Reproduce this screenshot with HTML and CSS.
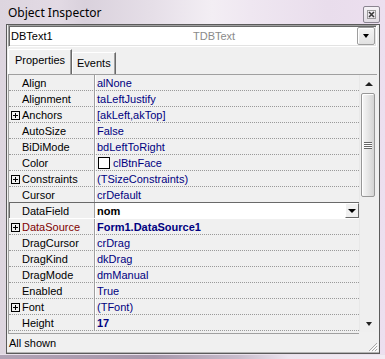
FILE: index.html
```html
<!doctype html>
<html>
<head>
	<meta charset="utf-8">
	<title>Object Inspector</title>
	<link rel="stylesheet" href="styles.css">
</head>
<body>
	<div class="frame">
		<div class="titlebar">
			<span class="caption">Object Inspector</span>
			<span class="close">
				<svg width="9" height="9" viewBox="0 0 9 9">
					<rect x="0.5" y="0.5" width="8" height="8" fill="none" stroke="#9a9a9a"/>
					<path d="M2 2 L7 7 M7 2 L2 7" stroke="#3a3a3a" stroke-width="1.6"/>
				</svg>
			</span>
		</div>
		<div class="client">
			<div class="combo">
				<span class="combo-name">DBText1</span>
				<span class="combo-type">TDBText</span>
				<span class="combo-btn"><i class="down"></i></span>
			</div>
			<div class="tabs">
				<div class="tab active">Properties</div>
				<div class="tab">Events</div>
			</div>
			<div class="grid">
				<div class="rows">
					<div class="row"><div class="name"><span class="exp"></span>Align</div><div class="value">alNone</div></div>
					<div class="row"><div class="name"><span class="exp"></span>Alignment</div><div class="value">taLeftJustify</div></div>
					<div class="row"><div class="name"><span class="exp plus"></span>Anchors</div><div class="value">[akLeft,akTop]</div></div>
					<div class="row"><div class="name"><span class="exp"></span>AutoSize</div><div class="value">False</div></div>
					<div class="row"><div class="name"><span class="exp"></span>BiDiMode</div><div class="value">bdLeftToRight</div></div>
					<div class="row"><div class="name"><span class="exp"></span>Color</div><div class="value"><span class="swatch"></span>clBtnFace</div></div>
					<div class="row"><div class="name"><span class="exp plus"></span>Constraints</div><div class="value">(TSizeConstraints)</div></div>
					<div class="row before-sel"><div class="name"><span class="exp"></span>Cursor</div><div class="value">crDefault</div></div>
					<div class="row selected"><div class="name"><span class="exp"></span>DataField</div><div class="value edit"><b>nom</b><span class="row-btn"><i class="down"></i></span></div></div>
					<div class="row"><div class="name ref"><span class="exp plus"></span>DataSource</div><div class="value"><b>Form1.DataSource1</b></div></div>
					<div class="row"><div class="name"><span class="exp"></span>DragCursor</div><div class="value">crDrag</div></div>
					<div class="row"><div class="name"><span class="exp"></span>DragKind</div><div class="value">dkDrag</div></div>
					<div class="row"><div class="name"><span class="exp"></span>DragMode</div><div class="value">dmManual</div></div>
					<div class="row"><div class="name"><span class="exp"></span>Enabled</div><div class="value">True</div></div>
					<div class="row"><div class="name"><span class="exp plus"></span>Font</div><div class="value">(TFont)</div></div>
					<div class="row"><div class="name"><span class="exp"></span>Height</div><div class="value"><b>17</b></div></div>
				</div>
				<div class="vscroll">
					<div class="sb-arrow"><i class="up"></i></div>
					<div class="thumb"><span class="grip"></span></div>
					<div class="sb-track"></div>
					<div class="sb-arrow"><i class="down small"></i></div>
				</div>
			</div>
			<div class="status">
				All shown
				<svg class="sizegrip" width="12" height="12" viewBox="0 0 12 12">
					<path d="M11 3 L3 11 M11 6 L6 11 M11 9 L9 11" stroke="#a8a8a8" stroke-width="1"/>
					<path d="M12 4 L4 12 M12 7 L7 12 M12 10 L10 12" stroke="#ffffff" stroke-width="1"/>
				</svg>
			</div>
		</div>
		<div class="bottom"></div>
	</div>
</body>
</html>
```
FILE: styles.css
```css
body {
	margin: 0;
	background: #e6dde8;
}
.frame {
	width: 385px;
	height: 359px;
	box-sizing: border-box;
	padding: 0 5px 0 6px;
	display: flex;
	flex-direction: column;
	background: linear-gradient(90deg, #ddd5df 0%, #e2dae4 15%, #d9d1dc 22%, #e6dfe8 40%, #f3eef4 55%, #efe7f1 65%, #e9ddec 85%, #ecdfef 100%);
	font-family: "Liberation Sans", Arial, sans-serif;
	font-size: 11px;
	color: #000;
}
.titlebar {
	height: 24px;
	display: flex;
	align-items: flex-start;
	justify-content: space-between;
}
.caption {
	font-family: "Noto Sans", "Liberation Sans", sans-serif;
	font-size: 12px;
	line-height: 16px;
	padding: 5px 0 0 2px;
}
.close {
	width: 15px;
	height: 15px;
	margin: 6px 0 0 0;
	border: 1px solid #8a8490;
	border-radius: 2px;
	background: linear-gradient(#f6f3f7, #e2dce4);
	display: flex;
	align-items: center;
	justify-content: center;
}
.client {
	height: 330px;
	box-sizing: border-box;
	border: 1px solid #5b5b5b;
	background: #f0f0f0;
	display: flex;
	flex-direction: column;
}
.combo {
	height: 22px;
	box-sizing: border-box;
	margin: 0 2px 0 1px;
	border: 1px solid;
	border-color: #a0a0a0 #ffffff #ffffff #a0a0a0;
	box-shadow: inset 1px 1px #696969, inset -1px -1px #e3e3e3;
	background: #fff;
	display: flex;
	align-items: center;
}
.combo-name {
	width: 182px;
	padding-left: 2px;
	line-height: 20px;
}
.combo-type {
	flex: 1;
	color: #8a8a8a;
}
.combo-btn {
	width: 18px;
	height: 18px;
	box-sizing: border-box;
	margin-right: 1px;
	border: 1px solid #9e9e9e;
	border-radius: 2px;
	background: linear-gradient(#f4f4f4, #e2e2e2);
	box-shadow: inset 1px 1px #fff;
	display: flex;
	align-items: center;
	justify-content: center;
}
.down {
	width: 0;
	height: 0;
	border-left: 3px solid transparent;
	border-right: 3px solid transparent;
	border-top: 4px solid #000;
}
.down.small {
	border-top-color: #222;
}
.up {
	width: 0;
	height: 0;
	border-left: 4px solid transparent;
	border-right: 4px solid transparent;
	border-bottom: 4px solid #222;
}
.tabs {
	height: 27px;
	display: flex;
	align-items: flex-end;
	padding-left: 1px;
}
.tab {
	height: 22px;
	box-sizing: border-box;
	padding: 0 4px;
	border-top: 1px solid #fff;
	border-left: 1px solid #fff;
	border-right: 1px solid #696969;
	box-shadow: inset -1px 0 #a0a0a0;
	line-height: 20px;
}
.tab.active {
	height: 25px;
	width: 64px;
	text-align: center;
	line-height: 20px;
}
.grid {
	height: 260px;
	box-sizing: border-box;
	margin: 0 2px 0 1px;
	border-top: 1px solid #a0a0a0;
	border-left: 1px solid #a0a0a0;
	display: flex;
	align-items: flex-start;
}
.rows {
	width: 350px;
	height: 259px;
	box-sizing: border-box;
	padding-bottom: 2px;
	border-bottom: 1px solid #a0a0a0;
}
.row {
	height: 16px;
	box-sizing: border-box;
	border-bottom: 1px dotted #9a9a9a;
	display: flex;
}
.name {
	width: 86px;
	height: 15px;
	box-sizing: border-box;
	padding: 1px 0 0 2px;
	border-right: 1px solid #a0a0a0;
	line-height: 15px;
	display: flex;
	align-items: flex-start;
	white-space: nowrap;
}
.name.ref {
	color: #800000;
}
.exp {
	width: 9px;
	height: 9px;
	flex: none;
	margin: 3px 2px 0 0;
	box-sizing: border-box;
}
.exp.plus {
	border: 1px solid #000;
	background:
		linear-gradient(#000, #000) center / 5px 1px no-repeat,
		linear-gradient(#000, #000) center / 1px 5px no-repeat;
}
.value {
	flex: 1;
	height: 15px;
	box-sizing: border-box;
	padding: 1px 0 0 1px;
	border-left: 1px solid #fff;
	line-height: 15px;
	color: #000080;
	white-space: nowrap;
	display: flex;
	align-items: flex-start;
}
.swatch {
	width: 12px;
	height: 12px;
	box-sizing: border-box;
	margin: 1px 3px 0 1px;
	border: 1px solid #000;
	background: #fff;
}
.row.before-sel {
	border-bottom: 1px solid #696969;
}
.row.selected {
	border-bottom: 1px solid #fff;
}
.row.selected .name {
	box-shadow: inset 1px 0 #696969;
}
.value.edit {
	background: #fff;
	color: #000;
	justify-content: space-between;
}
.row-btn {
	width: 14px;
	height: 15px;
	box-sizing: border-box;
	margin-top: -1px;
	border: 1px solid;
	border-color: #fff #696969 #696969 #fff;
	background: #f0f0f0;
	display: flex;
	align-items: center;
	justify-content: center;
}
.row-btn .down {
	border-left-width: 4px;
	border-right-width: 4px;
}
.vscroll {
	width: 18px;
	height: 257px;
	box-sizing: border-box;
	border-left: 1px solid #e8e8e8;
	background: #efefef;
	display: flex;
	flex-direction: column;
}
.sb-arrow {
	height: 17px;
	display: flex;
	align-items: center;
	justify-content: center;
}
.thumb {
	height: 102px;
	margin: 1px 2px 0 1px;
	border: 1px solid #979797;
	border-radius: 2px;
	background: linear-gradient(90deg, #f7f7f7, #e8e8e8 45%, #d4d4d4);
	box-shadow: inset 1px 1px #fff;
	display: flex;
	align-items: center;
	justify-content: center;
}
.grip {
	width: 8px;
	height: 7px;
	background: repeating-linear-gradient(#666 0 1px, #fff 1px 2px);
}
.sb-track {
	flex: 1;
}
.status {
	height: 19px;
	box-sizing: border-box;
	padding-left: 2px;
	border-bottom: 1px solid #b4b4b4;
	line-height: 18px;
	position: relative;
}
.sizegrip {
	position: absolute;
	right: 1px;
	bottom: 0;
}
.bottom {
	height: 5px;
	margin: 0 -5px 0 -6px;
	background:
		linear-gradient(#e9e1eb 0 1px, transparent 1px),
		linear-gradient(90deg, #b0a2b5 0%, #a697ab 40%, #c8bccc 62%, #ece3ee 75%, #f2ecf3 100%);
}
```
